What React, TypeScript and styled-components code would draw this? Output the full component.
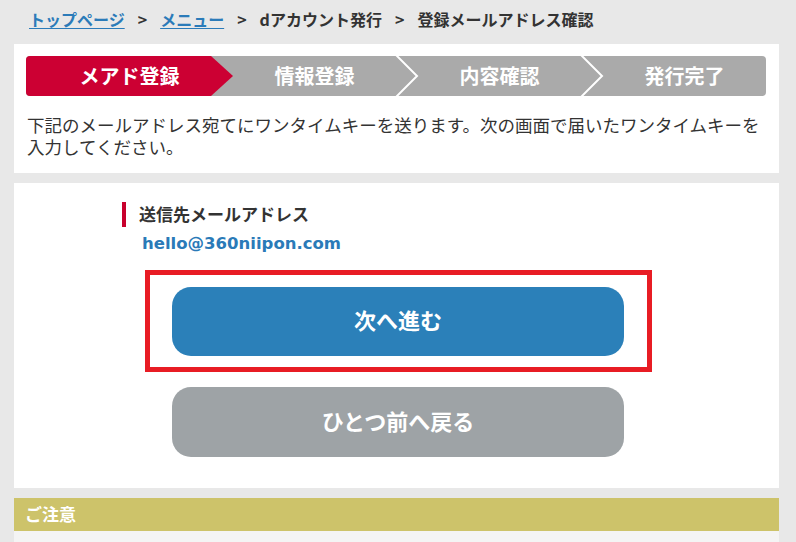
import styled, { createGlobalStyle } from 'styled-components'

const GlobalStyle = createGlobalStyle`
    body {
        margin: 0;
        background: #e8e8e8;
        font-family: "Noto Sans CJK JP", "Noto Sans", sans-serif;
        color: #333;
    }
`

const Page = styled.div`
    margin: 0 17px 0 14px;
`

const Breadcrumb = styled.nav`
    height: 44px;
    box-sizing: border-box;
    padding: 8px 0 0 15px;
    font-size: 16px;
    line-height: 22px;
    font-weight: 700;
    display: flex;
    white-space: nowrap;
`

const Crumb = styled.a`
    color: #2b7bb9;
    text-decoration: underline;
    text-underline-offset: 2px;
`

const Current = styled.span`
    color: #333;
`

const Sep = styled.span`
    margin: 0 13px;
    color: #333;
`

const Panel = styled.section`
    background: #fff;
`

const IntroPanel = styled(Panel)`
    padding: 12px 13px 15px 12px;
`

const StepBar = styled.ol`
    display: flex;
    margin: 0;
    padding: 0;
    list-style: none;
    height: 40px;
    background: #aaaaaa;
    border-radius: 4px;
`

const Step = styled.li<{ $active?: boolean }>`
    position: relative;
    flex: 1;
    display: flex;
    align-items: center;
    justify-content: center;
    padding: 0 0 2px 22px;
    color: #fff;
    font-size: 20px;
    font-weight: 700;
    background: ${p => (p.$active ? '#cc0033' : 'transparent')};
    border-radius: ${p => (p.$active ? '4px 0 0 4px' : '0')};

    ${p => p.$active && `
        &::after {
            content: "";
            position: absolute;
            top: 0;
            right: -22px;
            width: 22px;
            height: 100%;
            background: #cc0033;
            clip-path: polygon(0 0, 100% 50%, 0 100%);
            z-index: 1;
        }
    `}
`

const Chevron = styled.svg`
    position: absolute;
    top: 0;
    right: -23px;
    width: 24px;
    height: 40px;
`

const Intro = styled.p`
    margin: 18px 0 0 1px;
    max-width: 738px;
    font-size: 17.5px;
    line-height: 22px;
`

const ConfirmPanel = styled(Panel)`
    margin-top: 10px;
    padding: 19px 0 31px;
`

const Column = styled.div`
    width: 552px;
    margin-left: 108px;
    display: flex;
    flex-direction: column;
`

const Label = styled.h2`
    margin: 0;
    border-left: 4px solid #c8002d;
    padding-left: 13px;
    height: 25px;
    font-size: 17px;
    line-height: 24px;
    font-weight: 700;
`

const Email = styled.div`
    margin: 5px 0 0 20px;
    font-family: "DejaVu Sans", sans-serif;
    font-weight: 700;
    font-size: 16.5px;
    line-height: 23px;
    color: #2a7ab8;
`

const Highlight = styled.div`
    align-self: center;
    margin-top: 15px;
    width: 507px;
    box-sizing: border-box;
    border: 5px solid #e81c24;
    padding: 12px 0 11px;
    display: flex;
    justify-content: center;
`

const Button = styled.button<{ $variant: 'primary' | 'back' }>`
    width: 452px;
    height: ${p => (p.$variant === 'primary' ? '69px' : '70px')};
    padding: 0 0 5px;
    border: none;
    border-radius: 19px;
    background: ${p => (p.$variant === 'primary' ? '#2b80b9' : '#9ea3a6')};
    color: #fff;
    font-family: "Noto Sans CJK JP", sans-serif;
    font-size: 22px;
    font-weight: 700;
    cursor: pointer;
`

const BackButton = styled(Button)`
    align-self: center;
    margin-top: 15px;
`

const NoticeHead = styled.h3`
    margin: 10px 0 0;
    height: 33px;
    padding-left: 11px;
    background: #cdc36a;
    color: #fff;
    font-size: 17px;
    font-weight: 700;
    line-height: 31px;
`

const NoticeBody = styled.div`
    height: 11px;
    background: #f4f4f4;
`

const steps = ['メアド登録', '情報登録', '内容確認', '発行完了']

export default function App() {
    return (
        <>
            <GlobalStyle />
            <Page>
                <Breadcrumb>
                    <Crumb href="#">トップページ</Crumb>
                    <Sep>&gt;</Sep>
                    <Crumb href="#">メニュー</Crumb>
                    <Sep>&gt;</Sep>
                    <Current>dアカウント発行</Current>
                    <Sep>&gt;</Sep>
                    <Current>登録メールアドレス確認</Current>
                </Breadcrumb>

                <IntroPanel>
                    <StepBar>
                        {steps.map((s, i) => (
                            <Step key={s} $active={i === 0}>
                                {s}
                                {i > 0 && i < steps.length - 1 && (
                                    <Chevron viewBox="0 0 24 40">
                                        <polyline points="1,-1 22,20 1,41" fill="none" stroke="#fff" strokeWidth="2" />
                                    </Chevron>
                                )}
                            </Step>
                        ))}
                    </StepBar>
                    <Intro>
                        下記のメールアドレス宛てにワンタイムキーを送ります。次の画面で届いたワンタイムキーを入力してください。
                    </Intro>
                </IntroPanel>

                <ConfirmPanel>
                    <Column>
                        <Label>送信先メールアドレス</Label>
                        <Email>hello@360niipon.com</Email>
                        <Highlight>
                            <Button $variant="primary">次へ進む</Button>
                        </Highlight>
                        <BackButton $variant="back">ひとつ前へ戻る</BackButton>
                    </Column>
                </ConfirmPanel>

                <NoticeHead>ご注意</NoticeHead>
                <NoticeBody />
            </Page>
        </>
    )
}
